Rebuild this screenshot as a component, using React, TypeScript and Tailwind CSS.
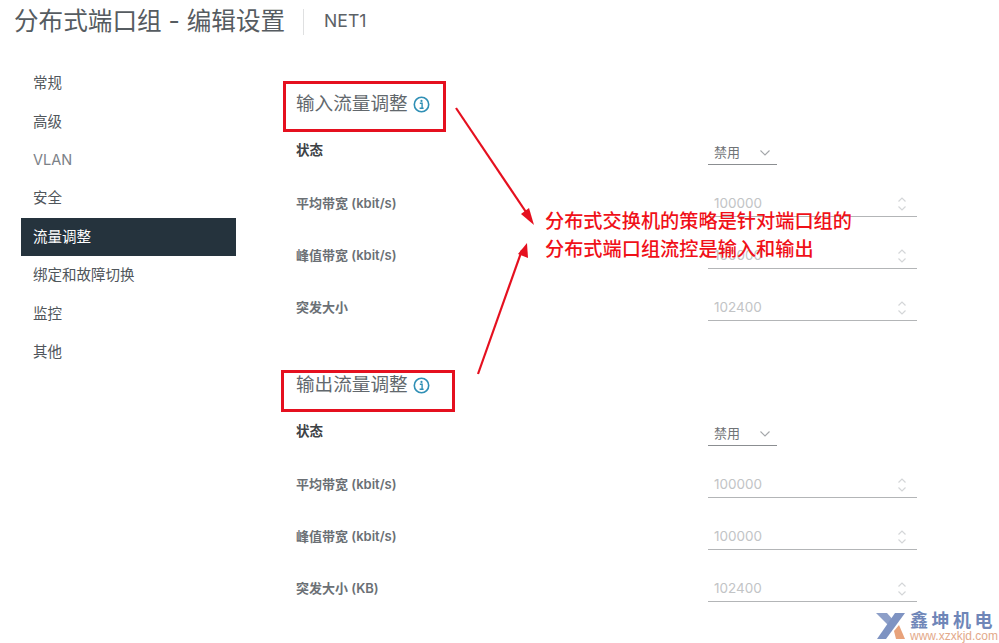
const font = {
  fontFamily: 'Inter, "Noto Sans CJK SC", sans-serif',
};

const navItems = ["常规", "高级", "VLAN", "安全", "流量调整", "绑定和故障切换", "监控", "其他"];

function InfoIcon() {
  return (
    <svg width="17" height="17" viewBox="0 0 17 17" fill="none" className="ml-[5px] shrink-0">
      <circle cx="8.5" cy="8.5" r="7.2" stroke="#2f8fb5" strokeWidth="1.6" />
      <circle cx="8.5" cy="4.9" r="1.1" fill="#2f8fb5" />
      <path d="M6.8 7.3h2.3v4.6M6.6 12.2h4" stroke="#2f8fb5" strokeWidth="1.4" />
    </svg>
  );
}

function Spinner() {
  return (
    <svg width="10" height="16" viewBox="0 0 10 16" fill="none" stroke="#d4d6d8" strokeWidth="1.2">
      <path d="M1.5 5.5 5 2l3.5 3.5M1.5 10.5 5 14l3.5-3.5" />
    </svg>
  );
}

function NumberRow({ label, value }: { label: string; value: string }) {
  return (
    <div className="flex h-[52px] items-center">
      <div className="w-[412px] text-[13px] font-semibold text-[#6b7075]">{label}</div>
      <div className="flex h-[25px] w-[209px] items-center justify-between border-b border-[#b3b5b7] pl-[6px] pr-[10px] text-[13.5px] text-[#c2c4c6]">
        <span>{value}</span>
        <Spinner />
      </div>
    </div>
  );
}

function Section({ title, lastLabel }: { title: string; lastLabel: string }) {
  return (
    <section>
      <h2 className="flex h-[30px] items-center text-[18.6px] font-normal text-[#62686d]">
        {title}
        <InfoIcon />
      </h2>
      <div className="mt-[11px] flex h-[40px] items-center">
        <div className="w-[412px] text-[13.5px] font-bold text-[#3d4246]">状态</div>
        <div className="flex h-[29px] w-[69px] items-center border-b border-[#8b8e91] pl-[6px] pt-[6px] text-[13px] text-[#6f7376]">
          <span>禁用</span>
          <svg width="12" height="8" viewBox="0 0 12 8" fill="none" stroke="#a4a7aa" strokeWidth="1.1" className="ml-[19px]">
            <path d="m1.5 1.5 4.5 4.5 4.5-4.5" />
          </svg>
        </div>
      </div>
      <div className="mt-[8px]">
        <NumberRow label="平均带宽 (kbit/s)" value="100000" />
        <NumberRow label="峰值带宽 (kbit/s)" value="100000" />
        <NumberRow label={lastLabel} value="102400" />
      </div>
    </section>
  );
}

export default function App() {
  return (
    <div className="relative h-[643px] w-[999px] overflow-hidden bg-white" style={font}>
      <header className="flex h-[43px] items-center pl-[14px]">
        <h1 className="text-[24.6px] font-normal leading-none text-[#565c61]">分布式端口组 - 编辑设置</h1>
        <div className="ml-[18px] h-[26px] w-px bg-[#dfe0e1]" />
        <div className="ml-[20px] text-[17.6px] text-[#5c6166]">NET1</div>
      </header>

      <div className="flex pt-[21px]">
        <nav className="ml-[21px] w-[215px]">
          {navItems.map((item) => (
            <div
              key={item}
              className={`flex h-[38.4px] items-center pl-[12px] text-[14.5px] ${
                item === "流量调整" ? "bg-[#25333d] text-white" : item === "VLAN" ? "text-[#7b8187]" : "text-[#50565b]"
              }`}
            >
              {item}
            </div>
          ))}
        </nav>
        <main className="ml-[60px] flex flex-col gap-[36px] pt-[25px]">
          <Section title="输入流量调整" lastLabel="突发大小" />
          <Section title="输出流量调整" lastLabel="突发大小 (KB)" />
        </main>
      </div>

      {/* annotations on top of the screenshot */}
      <div className="absolute left-[283px] top-[81px] h-[51px] w-[163px] border-[3px] border-[#e5101f]" />
      <div className="absolute left-[281px] top-[370px] h-[42px] w-[174px] border-[3px] border-[#e5101f]" />
      <svg className="absolute left-0 top-0" width="999" height="643" fill="none">
        <path d="M456 108 530 218" stroke="#e5101f" strokeWidth="2.2" />
        <path d="M534 225 521 214 529 208Z" fill="#e5101f" />
        <path d="M478 374 522 250" stroke="#e5101f" strokeWidth="2.2" />
        <path d="M527 243 528 258 518 254Z" fill="#e5101f" />
      </svg>
      <div className="absolute left-[545px] top-[207px] text-[19.2px] font-medium leading-[28px] text-[#f01018]">
        <div>分布式交换机的策略是针对端口组的</div>
        <div>分布式端口组流控是输入和输出</div>
      </div>

      {/* watermark */}
      <div className="absolute left-[875px] top-[611px] flex w-[124px] items-start whitespace-nowrap">
        <svg width="31" height="30" viewBox="0 0 31 30" fill="none" className="shrink-0">
          <path d="M1 2h11l8 9-5 5Z" fill="#8d9fc8" />
          <path d="M30 2H20L2 28h9Z" fill="#7e93c2" />
          <path d="M19 20l5-6 6 14h-9Z" fill="#e8a27a" />
        </svg>
        <div className="ml-[4px]">
          <div className="text-[18px] font-bold leading-[19px] tracking-[3.5px] text-[#6f86b8]">鑫坤机电</div>
          <div className="text-[12px] leading-[12px] text-[#e3a98a]" style={{ fontFamily: '"Liberation Sans", sans-serif' }}>
            www.xzxkjd.com
          </div>
        </div>
      </div>
    </div>
  );
}
